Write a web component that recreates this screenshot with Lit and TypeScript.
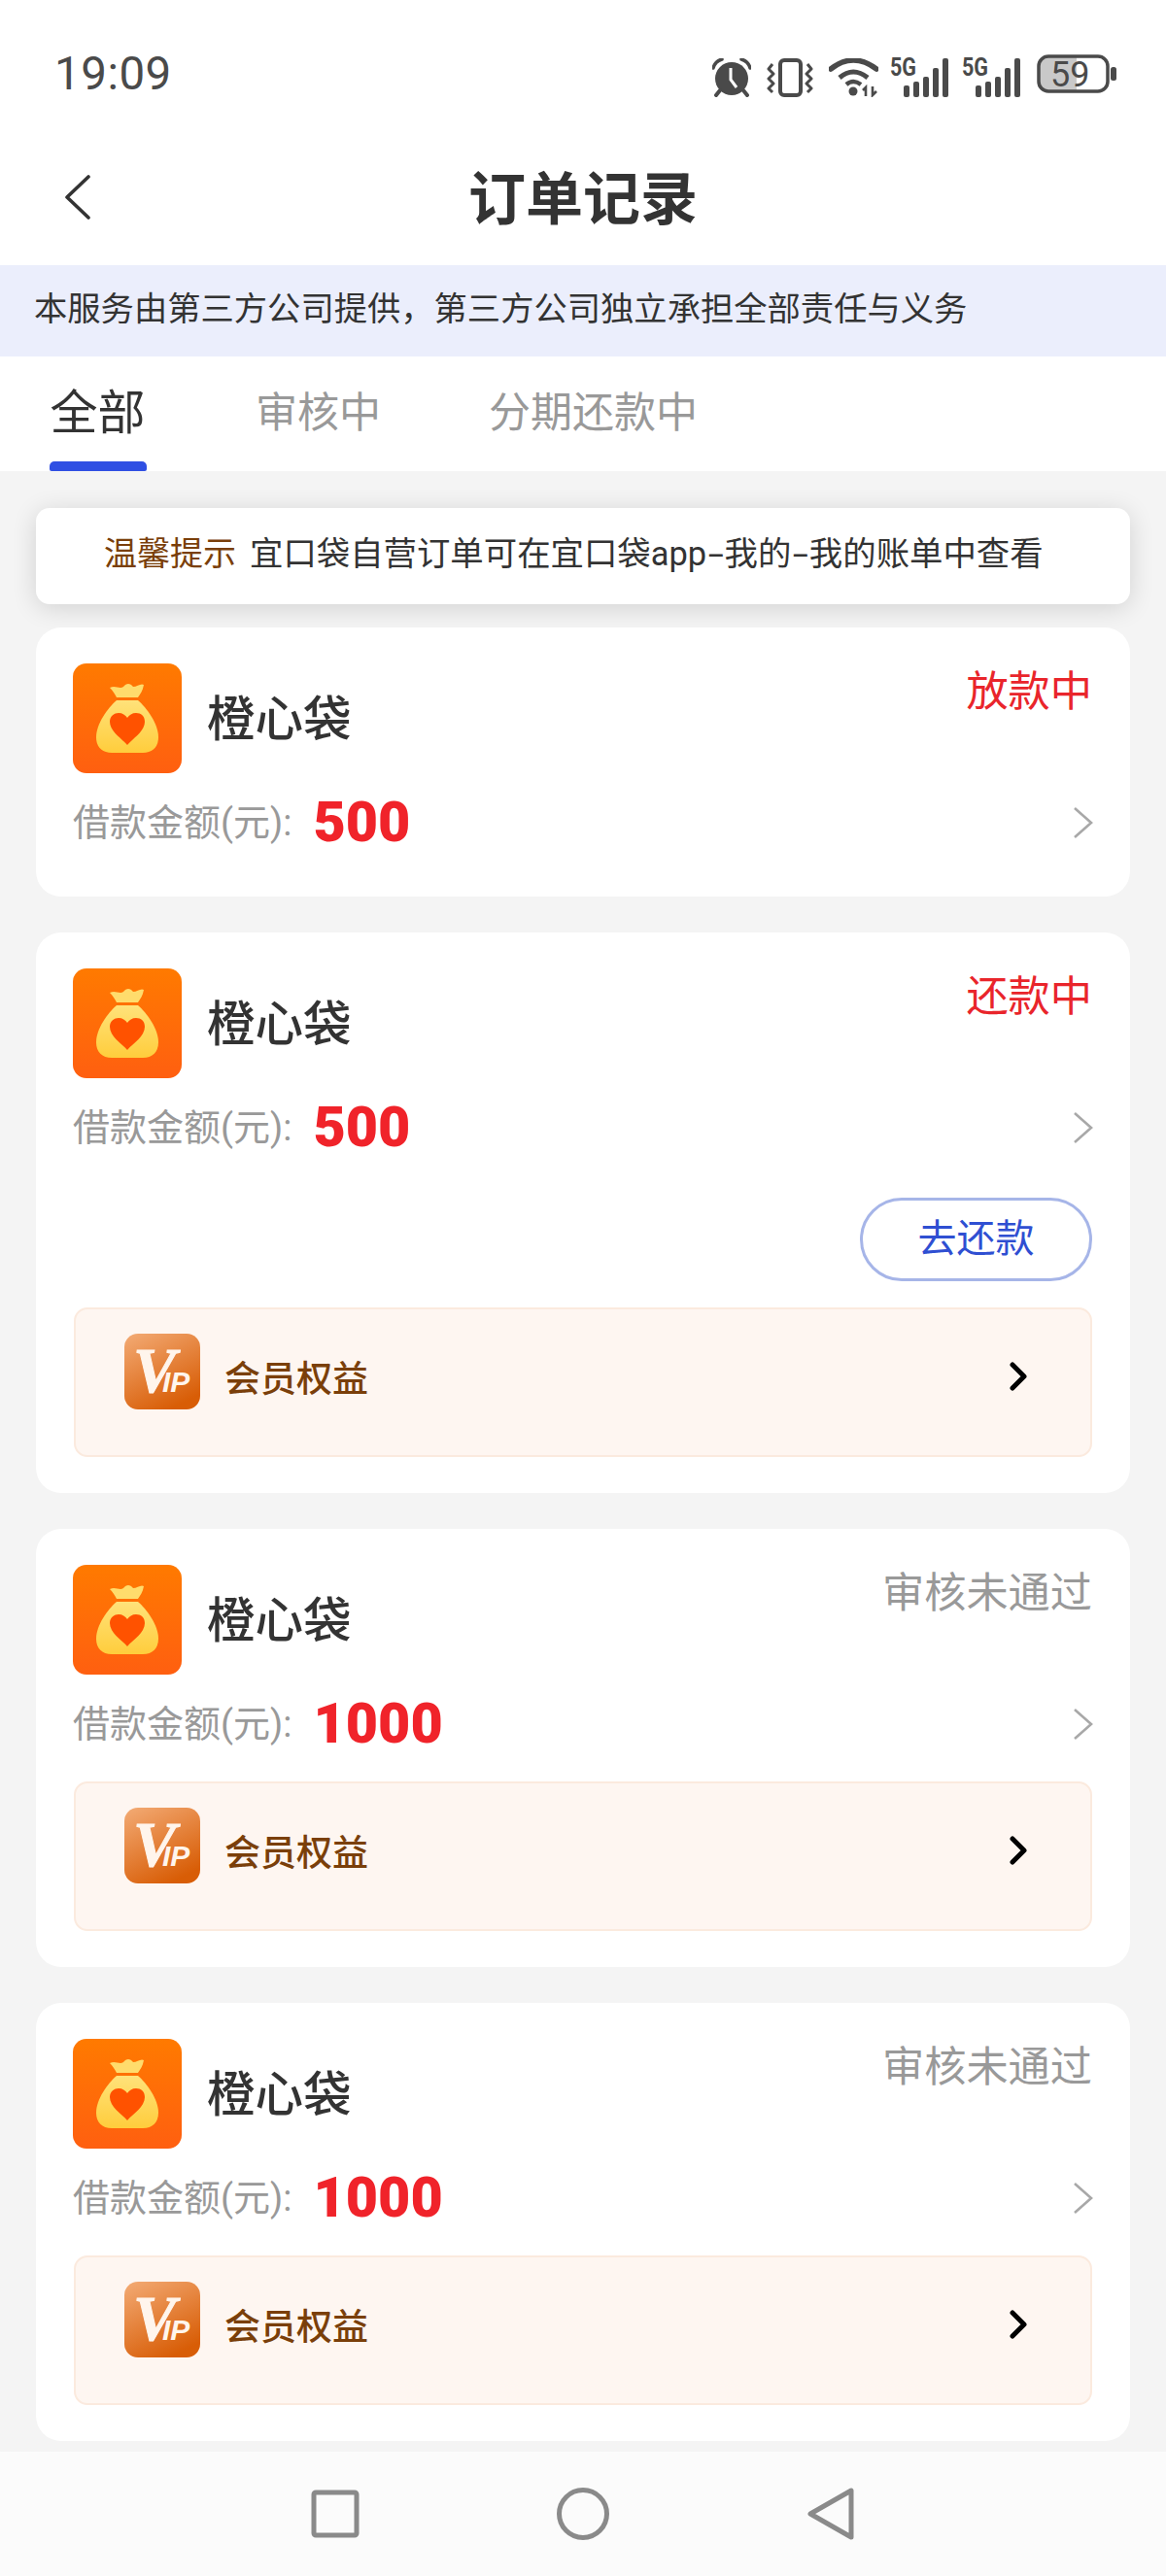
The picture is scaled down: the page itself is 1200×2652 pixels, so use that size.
import { LitElement, html, css, svg } from 'lit';
import { customElement } from 'lit/decorators.js';

type Order = {
  amount: string;
  status: string;
  active: boolean;
  repay?: boolean;
  vip?: boolean;
};

const orders: Order[] = [
  { amount: '500', status: '放款中', active: true },
  { amount: '500', status: '还款中', active: true, repay: true, vip: true },
  { amount: '1000', status: '审核未通过', active: false, vip: true },
  { amount: '1000', status: '审核未通过', active: false, vip: true },
];

const signalBars = svg`
  <rect x="14" y="28" width="6" height="12" rx="2"></rect>
  <rect x="24" y="24" width="6" height="16" rx="2"></rect>
  <rect x="34" y="19" width="6" height="21" rx="2"></rect>
  <rect x="44" y="10" width="6" height="30" rx="2"></rect>
  <rect x="54" y="0" width="6" height="40" rx="2"></rect>
`;

const signal = html`
  <svg width="61" height="46" viewBox="0 -6 61 46" fill="#4a4a4a">
    <text x="0" y="18" class="net" textLength="27" lengthAdjust="spacingAndGlyphs">5G</text>
    ${signalBars}
  </svg>
`;

const bagIcon = html`
  <svg class="bag" width="112" height="113" viewBox="0 0 112 113">
    <defs>
      <linearGradient id="bagBg" x1="0" y1="0" x2="0" y2="1">
        <stop offset="0" stop-color="#ff7a00"></stop>
        <stop offset="1" stop-color="#ff5f10"></stop>
      </linearGradient>
      <linearGradient id="bagBody" x1="0" y1="0" x2="0" y2="1">
        <stop offset="0" stop-color="#ffe27a"></stop>
        <stop offset="1" stop-color="#ffcd3c"></stop>
      </linearGradient>
    </defs>
    <rect width="112" height="113" rx="14" fill="url(#bagBg)"></rect>
    <path d="M38 25 C44 22 48 27 52 24 C55 20 59 20 62 24 C66 24 70 20 73 22 C72 28 69 32 67 35 H45 C43 31 41 28 38 25Z" fill="#ffdc6c"></path>
    <path d="M45 38 H67 C76 46 88 62 88 76 C88 86 82 92 72 92 H40 C30 92 24 86 24 76 C24 62 36 46 45 38Z" fill="url(#bagBody)"></path>
    <path d="M56 84 C50 77 38 70 38 60 C38 54 43 51 47 51 C51 51 54 53 56 56 C58 53 61 51 65 51 C70 51 74 54 74 60 C74 70 62 77 56 84Z" fill="#ff5200"></path>
  </svg>
`;

const vipIcon = html`
  <svg class="vip-icon" width="78" height="78" viewBox="0 0 78 78">
    <defs>
      <linearGradient id="vipBg" x1="0.1" y1="0" x2="0.6" y2="1">
        <stop offset="0" stop-color="#f2a871"></stop>
        <stop offset="1" stop-color="#d85d06"></stop>
      </linearGradient>
    </defs>
    <rect width="78" height="78" rx="14" fill="url(#vipBg)"></rect>
    <text x="9" y="60" class="vip-mark"><tspan class="vip-v">V</tspan><tspan class="vip-ip">IP</tspan></text>
  </svg>
`;

@customElement('app-root')
export class AppRoot extends LitElement {
  static styles = css`
    :host {
      display: flex;
      flex-direction: column;
      width: 1200px;
      height: 2652px;
      overflow: hidden;
      background: #f4f4f4;
      color: #333;
      font-family: Roboto, 'Noto Sans CJK SC', sans-serif;
    }

    svg {
      display: block;
      flex: none;
    }

    .top {
      background: #fff;
    }

    .status-bar {
      display: flex;
      align-items: center;
      height: 112px;
      padding: 21px 51px 0 56px;
    }

    .time {
      padding-bottom: 2px;
      font-size: 47.5px;
      color: #4a4a4a;
      letter-spacing: 0.5px;
    }

    .status-icons {
      display: flex;
      align-items: flex-end;
      margin-left: auto;
    }

    .net {
      font-family: Roboto, sans-serif;
      font-size: 25px;
      font-weight: 700;
    }

    .alarm {
      margin-right: 16px;
    }

    .vibrate {
      margin-right: 16px;
    }

    .wifi {
      margin-right: 12px;
    }

    .sim {
      display: flex;
      gap: 13px;
      margin-right: 16px;
    }

    .battery-num {
      font-family: Roboto, sans-serif;
      font-size: 36px;
      fill: #4a4a4a;
    }

    .nav {
      display: grid;
      grid-template-columns: 1fr auto 1fr;
      align-items: center;
      height: 140px;
    }

    .back {
      margin-left: 66px;
    }

    .title {
      padding-bottom: 6px;
      font-size: 59px;
      font-weight: 700;
      color: #333;
    }

    .notice {
      height: 94px;
      line-height: 90px;
      padding-left: 35px;
      background: #ebeefc;
      font-size: 34.3px;
      color: #333;
      white-space: nowrap;
    }

    .tabs {
      display: flex;
      gap: 111px;
      height: 118px;
      padding-left: 49px;
      background: #fff;
    }

    .tab {
      display: flex;
      flex-direction: column;
      align-items: center;
      padding-top: 9px;
      font-size: 43px;
      line-height: 99px;
      color: #999;
    }

    .tab.on {
      width: 103px;
      font-size: 49px;
      color: #333;
    }

    .tab-bar {
      width: 100px;
      height: 10px;
      border-radius: 5px 5px 2px 2px;
      background: #2f4fe3;
    }

    .list {
      flex: 1;
      min-height: 0;
      overflow: hidden;
      display: flex;
      flex-direction: column;
      gap: 37.5px;
      padding: 38px 37px 0;
    }

    .tip {
      flex: none;
      height: 99px;
      line-height: 94px;
      margin-bottom: -13.5px;
      padding-left: 70px;
      border-radius: 14px;
      background: #fff;
      box-shadow: 0 4px 26px rgba(0, 0, 0, 0.14);
      font-size: 34.4px;
      color: #333;
      white-space: nowrap;
    }

    .tip b {
      margin-right: 14px;
      font-size: 34px;
      font-weight: 400;
      color: #7a3f0a;
    }

    .dash {
      display: inline-block;
      margin: 0 4.5px;
      transform: scaleX(1.7);
    }

    .card {
      display: flex;
      flex-direction: column;
      flex: none;
      padding: 37px 38px;
      border-radius: 26px;
      background: #fff;
    }

    .head {
      display: flex;
    }

    .name {
      align-self: center;
      margin-left: 26px;
      padding-bottom: 6px;
      font-size: 49.5px;
      font-weight: 500;
      color: #333;
    }

    .state {
      margin-left: auto;
      padding-right: 1px;
      font-size: 43.2px;
      line-height: 60px;
      color: #e9252b;
    }

    .state.off {
      color: #999;
    }

    .amount {
      display: flex;
      align-items: center;
      height: 58px;
      margin: 22px 0 9.5px;
    }

    .amount-label {
      padding-bottom: 8px;
      font-size: 38px;
      color: #999;
    }

    .amount-value {
      margin-left: 22px;
      padding-bottom: 1px;
      font-size: 57.5px;
      font-weight: 900;
      color: #f0232a;
    }

    .arrow {
      margin-left: auto;
    }

    .actions {
      display: flex;
      justify-content: flex-end;
      margin: 33.5px 1px 6.5px 0;
    }

    .repay {
      width: 239px;
      height: 86px;
      box-sizing: border-box;
      border: 3px solid #a6b5e8;
      border-radius: 43px;
      background: #fff;
      font: inherit;
      font-size: 40px;
      line-height: 74px;
      color: #2f4fd2;
    }

    .vip {
      display: flex;
      align-items: center;
      box-sizing: border-box;
      height: 153.5px;
      margin: 20.5px 1px 0;
      padding: 0 65px 8px 50px;
      border: 2px solid #fbeade;
      border-radius: 14px;
      background: #fef6f1;
    }

    .vip-icon {
      align-self: flex-start;
      margin-top: 25px;
    }

    .vip-mark {
      font-weight: 700;
      font-style: italic;
      fill: #fff5ec;
    }

    .vip-v {
      font-family: 'Liberation Serif', serif;
      font-size: 66px;
      letter-spacing: -14px;
      stroke: #fff5ec;
      stroke-width: 1px;
    }

    .vip-ip {
      font-family: 'Liberation Sans', sans-serif;
      font-size: 30px;
    }

    .vip-text {
      margin-left: 25px;
      padding-bottom: 4px;
      font-size: 37px;
      font-weight: 500;
      color: #7a3f0a;
    }

    .vip-arrow {
      margin: 0 0 4px auto;
    }

    .nav-bar {
      display: flex;
      justify-content: center;
      align-items: center;
      gap: 201px;
      flex: none;
      height: 128px;
      background: #fbfbfb;
    }
  `;

  renderCard(order: Order) {
    return html`
      <div class="card">
        <div class="head">
          ${bagIcon}
          <div class="name">橙心袋</div>
          <div class="state ${order.active ? '' : 'off'}">${order.status}</div>
        </div>
        <div class="amount">
          <span class="amount-label">借款金额(元):</span>
          <span class="amount-value">${order.amount}</span>
          <svg class="arrow" width="20" height="32" viewBox="0 0 20 32" fill="none" stroke="#a8a8a8" stroke-width="2.6">
            <path d="M1 1 L18 16 L1 31"></path>
          </svg>
        </div>
        ${order.repay
          ? html`<div class="actions"><button class="repay">去还款</button></div>`
          : ''}
        ${order.vip
          ? html`
              <div class="vip">
                ${vipIcon}
                <span class="vip-text">会员权益</span>
                <svg class="vip-arrow" width="18" height="30" viewBox="0 0 18 30" fill="none" stroke="#000" stroke-width="5" stroke-linecap="round" stroke-linejoin="round">
                  <path d="M3 3 L15 15 L3 27"></path>
                </svg>
              </div>
            `
          : ''}
      </div>
    `;
  }

  render() {
    return html`
      <div class="top">
        <div class="status-bar">
          <span class="time">19:09</span>
          <div class="status-icons">
            <svg class="alarm" width="40" height="40" viewBox="0 0 40 40" fill="#4a4a4a">
              <path d="M1 10 Q3 3 10 1" fill="none" stroke="#4a4a4a" stroke-width="3.5" stroke-linecap="round"></path>
              <path d="M39 10 Q37 3 30 1" fill="none" stroke="#4a4a4a" stroke-width="3.5" stroke-linecap="round"></path>
              <circle cx="20" cy="21" r="17"></circle>
              <path d="M8 33 L4 38 M32 33 L36 38" stroke="#4a4a4a" stroke-width="4" stroke-linecap="round"></path>
              <path d="M19 10 V22 L25 30" fill="none" stroke="#fff" stroke-width="3"></path>
            </svg>
            <svg class="vibrate" width="48" height="40" viewBox="0 0 48 40" fill="none" stroke="#4a4a4a" stroke-linejoin="round">
              <rect x="14" y="2" width="21" height="36" rx="4" stroke-width="4"></rect>
              <path d="M6 6 L2 11 L7 16 L2 21 L7 26 L2 31 L6 35" stroke-width="3"></path>
              <path d="M42 6 L46 11 L41 16 L46 21 L41 26 L46 31 L42 35" stroke-width="3"></path>
            </svg>
            <svg class="wifi" width="51" height="40" viewBox="0 0 51 40" fill="none" stroke="#4a4a4a">
              <path d="M2 11 Q25 -7 49 11" stroke-width="5.5" stroke-linecap="round"></path>
              <path d="M11 20 Q25 8 40 20" stroke-width="5"></path>
              <path d="M18 27 Q25 21 33 27" stroke-width="4.5"></path>
              <circle cx="25" cy="34" r="4.5" fill="#4a4a4a" stroke="none"></circle>
              <path d="M38 39 V30 L35 33 M45 29 V38 L49 34" stroke-width="2.6"></path>
            </svg>
            <div class="sim">${signal}${signal}</div>
            <svg width="82" height="44" viewBox="0 0 82 44">
              <path d="M9 3 H41 V37 H9 Q3 37 3 31 V9 Q3 3 9 3Z" fill="#c9c9c9"></path>
              <rect x="2" y="2" width="71" height="36" rx="10" fill="none" stroke="#4a4a4a" stroke-width="3.5"></rect>
              <text x="14" y="33" class="battery-num">59</text>
              <rect x="76" y="13" width="6" height="14" rx="2.5" fill="#4a4a4a"></rect>
            </svg>
          </div>
        </div>
        <div class="nav">
          <svg class="back" width="28" height="46" viewBox="0 0 28 46" fill="none" stroke="#333" stroke-width="3.6" stroke-linecap="round" stroke-linejoin="round">
            <path d="M25 2 L3 23 L25 44"></path>
          </svg>
          <div class="title">订单记录</div>
          <div></div>
        </div>
      </div>
      <div class="notice">本服务由第三方公司提供，第三方公司独立承担全部责任与义务</div>
      <div class="tabs">
        <div class="tab on">全部<div class="tab-bar"></div></div>
        <div class="tab">审核中</div>
        <div class="tab">分期还款中</div>
      </div>
      <div class="list">
        <div class="tip"><b>温馨提示</b>宜口袋自营订单可在宜口袋app<span class="dash">-</span>我的<span class="dash">-</span>我的账单中查看</div>
        ${orders.map((order) => this.renderCard(order))}
      </div>
      <div class="nav-bar">
        <svg width="54" height="54" viewBox="0 0 54 54" fill="none" stroke="#8a8a8a" stroke-width="5" stroke-linejoin="round">
          <rect x="5" y="5" width="44" height="44" rx="2"></rect>
        </svg>
        <svg width="54" height="54" viewBox="0 0 54 54" fill="none" stroke="#8a8a8a" stroke-width="5">
          <circle cx="27" cy="27" r="24.5"></circle>
        </svg>
        <svg width="54" height="54" viewBox="0 0 54 54" fill="none" stroke="#8a8a8a" stroke-width="5" stroke-linejoin="round">
          <path d="M48 3 V51 L6 27 Z"></path>
        </svg>
      </div>
    `;
  }
}
